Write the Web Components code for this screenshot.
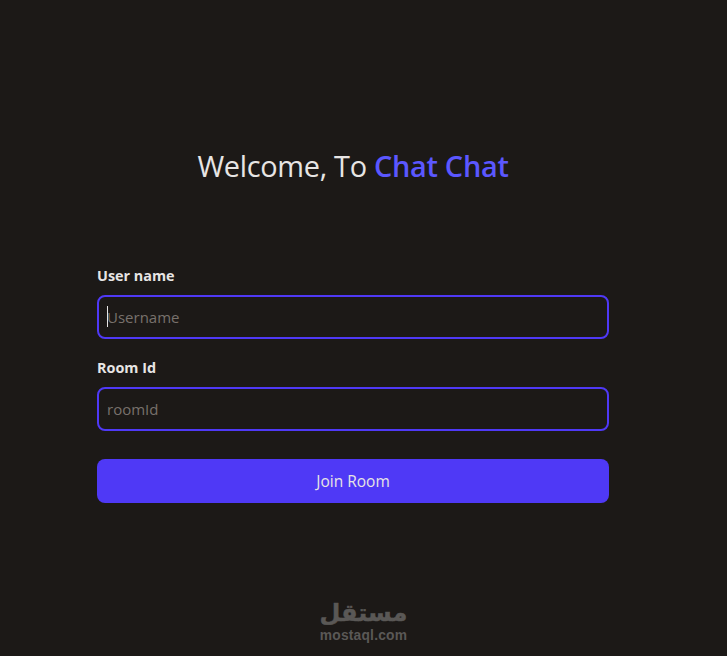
<!DOCTYPE html>
<html lang="en">
<head>
<meta charset="utf-8">
<title>Chat Chat</title>
<style>
  html, body { margin: 0; height: 100%; background: #1c1917; }
  body { font-family: "Open Sans", "Noto Sans", sans-serif; color: #e7e5e4; }
</style>
</head>
<body>
<join-page>
  <welcome-title>Welcome, To <b slot="brand">Chat Chat</b></welcome-title>
  <join-form>
    <form-field label="User name" placeholder="Username" focused></form-field>
    <form-field label="Room Id" placeholder="roomId"></form-field>
    <join-button>Join Room</join-button>
  </join-form>
  <mostaql-mark></mostaql-mark>
</join-page>

<script>
class JoinPage extends HTMLElement {
    connectedCallback() {
        this.attachShadow({ mode: 'open' });
        this.shadowRoot.innerHTML = `
        <style>
            :host {
                display: block;
                position: relative;
                height: 656px;
                overflow: hidden;
                box-sizing: border-box;
                padding-top: 147px;
            }
            main {
                width: 706px;
                display: flex;
                flex-direction: column;
                align-items: center;
            }
        </style>
        <main><slot></slot></main>
        `;
    }
}
customElements.define('join-page', JoinPage);

class WelcomeTitle extends HTMLElement {
    connectedCallback() {
        this.attachShadow({ mode: 'open' });
        this.shadowRoot.innerHTML = `
        <style>
            :host {
                display: block;
                font-size: 28.9px;
                line-height: 38px;
                letter-spacing: -0.3px;
                margin-bottom: 81px;
                color: #e7e5e4;
            }
            ::slotted(b) {
                color: #5b57ff;
                font-weight: 600;
            }
        </style>
        <slot></slot><slot name="brand"></slot>
        `;
    }
}
customElements.define('welcome-title', WelcomeTitle);

class JoinForm extends HTMLElement {
    connectedCallback() {
        this.attachShadow({ mode: 'open' });
        this.shadowRoot.innerHTML = `
        <style>
            :host {
                display: flex;
                flex-direction: column;
                width: 512px;
            }
        </style>
        <slot></slot>
        `;
    }
}
customElements.define('join-form', JoinForm);

class FormField extends HTMLElement {
    connectedCallback() {
        this.attachShadow({ mode: 'open' });
        const label = this.getAttribute('label');
        const placeholder = this.getAttribute('placeholder');
        const caret = this.hasAttribute('focused') ? '<i class="caret"></i>' : '';
        this.shadowRoot.innerHTML = `
        <style>
            :host {
                display: block;
                margin-bottom: 19px;
            }
            label {
                display: block;
                font-size: 14.4px;
                font-weight: 700;
                line-height: 20px;
                margin-bottom: 9px;
                color: #e7e5e4;
            }
            .box {
                position: relative;
            }
            input {
                display: block;
                width: 100%;
                height: 44px;
                box-sizing: border-box;
                padding: 0 8px;
                background: #1c1917;
                border: 2px solid #4f39f6;
                border-radius: 8px;
                outline: none;
                font: 15px "Open Sans", "Noto Sans", sans-serif;
                color: #e7e5e4;
            }
            input::placeholder {
                color: #78716c;
                opacity: 1;
            }
            .caret {
                position: absolute;
                left: 10px;
                top: 11px;
                width: 1px;
                height: 21px;
                background: #e7e5e4;
            }
        </style>
        <label for="f">${label}</label>
        <div class="box">
            <input id="f" type="text" placeholder="${placeholder}">
            ${caret}
        </div>
        `;
    }
}
customElements.define('form-field', FormField);

class JoinButton extends HTMLElement {
    connectedCallback() {
        this.attachShadow({ mode: 'open' });
        this.shadowRoot.innerHTML = `
        <style>
            :host {
                display: block;
                margin-top: 9px;
            }
            button {
                display: block;
                width: 100%;
                height: 44px;
                border: 0;
                border-radius: 8px;
                background: #4f39f6;
                color: #e7e5e4;
                font: 15.5px "Open Sans", "Noto Sans", sans-serif;
                cursor: pointer;
            }
        </style>
        <button type="button"><slot></slot></button>
        `;
    }
}
customElements.define('join-button', JoinButton);

class MostaqlMark extends HTMLElement {
    connectedCallback() {
        this.attachShadow({ mode: 'open' });
        this.shadowRoot.innerHTML = `
        <style>
            :host {
                position: absolute;
                left: 0;
                right: 0;
                top: 600px;
                display: flex;
                flex-direction: column;
                align-items: center;
                gap: 3px;
                color: #5a5856;
                pointer-events: none;
            }
            .ar {
                font: 700 24px/26px "DejaVu Sans", sans-serif;
                -webkit-text-stroke: 0.5px #5a5856;
            }
            .en {
                font: 700 13.8px/14px "Liberation Sans", sans-serif;
                letter-spacing: 0.2px;
            }
        </style>
        <span class="ar" lang="ar" dir="rtl">مستقل</span>
        <span class="en">mostaql.com</span>
        `;
    }
}
customElements.define('mostaql-mark', MostaqlMark);
</script>
</body>
</html>
